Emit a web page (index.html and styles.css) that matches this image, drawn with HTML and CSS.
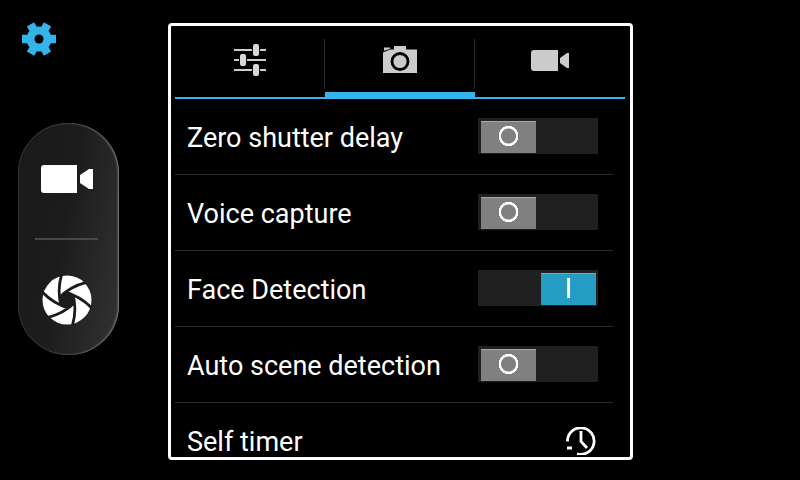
FILE: index.html
```html
<!DOCTYPE html>
<html lang="en">
<head>
<meta charset="utf-8">
<title>Camera settings</title>
<link rel="stylesheet" href="styles.css">
</head>
<body>
<aside class="side">
  <button class="gear" aria-label="Settings">
    <svg width="36" height="36" viewBox="-18 -18 36 36">
      <defs><path id="teeth" d="M-17-4.200h34v8.400h-34z"/></defs>
      <g fill="#35b4e9">
        <circle r="12.500"/>
        <use href="#teeth"/><use href="#teeth" transform="rotate(60)"/><use href="#teeth" transform="rotate(120)"/>
      </g>
      <circle r="4.500"/>
    </svg>
  </button>
  <div class="shutter-bar">
    <button class="capture" aria-label="Record video">
      <svg width="54" height="30" viewBox="0 0 54 30">
        <path fill="#fff" d="M4 1h33v28H4q-3 0-3-3V4q0-3 3-3zM53 5v20h-4l-9-6v-8l9-6z"/>
      </svg>
    </button>
    <hr class="split">
    <button class="capture" aria-label="Take photo">
      <svg width="50" height="50" viewBox="-25 -25 50 50">
        <defs><path id="blade" d="M-5.500-25Q-10-10-6 5"/></defs>
        <circle r="24.500" fill="#fff"/>
        <path fill="#1c1c1c" d="M-8.500 0l4.250-7.400h8.500L8.500 0 4.250 7.400h-8.500z"/>
        <g fill="none" stroke="#1c1c1c" stroke-width="2.800">
          <use href="#blade"/><use href="#blade" transform="rotate(60)"/><use href="#blade" transform="rotate(120)"/>
          <use href="#blade" transform="rotate(180)"/><use href="#blade" transform="rotate(240)"/><use href="#blade" transform="rotate(300)"/>
        </g>
      </svg>
    </button>
  </div>
</aside>
<main class="panel">
  <nav class="tabs">
    <button class="tab" aria-label="General">
      <svg width="34" height="34" viewBox="0 0 34 34">
        <path stroke="#ccc" stroke-width="2" d="M1 6h18M27 6h6M1 16h5M14 16h19M1 26h18M27 26h6"/>
        <g fill="#d8d8d8"><rect x="20" y="0" width="6" height="12" rx="2"/><rect x="7" y="10" width="6" height="12" rx="2"/><rect x="20" y="20" width="6" height="12" rx="2"/></g>
      </svg>
    </button>
    <button class="tab active" aria-label="Photo">
      <svg width="34" height="28" viewBox="0 0 34 28">
        <path fill="#ccc" d="M0 6.500l7-3h4V0h12v3.500h11V27H0zM1 1.500h6v1.200L1 4.800z"/>
        <circle cx="17" cy="15.500" r="8" fill="#ccc" stroke="#000" stroke-width="2.800"/>
      </svg>
    </button>
    <button class="tab" aria-label="Video">
      <svg width="38" height="22" viewBox="0 0 38 22">
        <path fill="#ccc" d="M3 0h24v21H3q-3 0-3-3V3q0-3 3-3zM38 3v15h-2l-7-5V8l7-5z"/>
      </svg>
    </button>
  </nav>
  <div class="list">
    <label class="row"><span>Zero shutter delay</span><input class="switch" type="checkbox"></label>
    <label class="row"><span>Voice capture</span><input class="switch" type="checkbox"></label>
    <label class="row"><span>Face Detection</span><input class="switch" type="checkbox" checked></label>
    <label class="row"><span>Auto scene detection</span><input class="switch" type="checkbox"></label>
    <button class="row"><span>Self timer</span>
      <svg width="32" height="28" viewBox="1 0 32 28">
        <path fill="none" stroke="#fff" stroke-width="2.800" d="M2.500 14.500A13.300 13.300 0 1 1 12 26.800M2 21h5M16 4V14.500l6 6.500"/>
      </svg>
    </button>
  </div>
</main>
</body>
</html>
```
FILE: styles.css
```css
* { box-sizing: border-box; }

body {
  margin: 0;
  height: 100vh;
  padding: 23px 0 20px;
  display: grid;
  grid-template-columns: 168px minmax(0, 1fr) 167px;
  grid-template-rows: minmax(0, 1fr);
  background: #000;
  color: #fff;
  font-family: Roboto, "Liberation Sans", sans-serif;
}

button {
  margin: 0;
  padding: 0;
  border: 0;
  background: none;
  color: inherit;
  font: inherit;
}

svg { display: block; }

.side {
  display: flex;
  flex-direction: column;
  align-items: flex-start;
  padding: 0 18px;
}

.gear {
  margin: -2px 0 0 3px;
}

.shutter-bar {
  display: flex;
  flex-direction: column;
  width: 101px;
  height: 232px;
  margin-top: 66px;
  padding-right: 4px;
  border-radius: 50px;
  background: linear-gradient(100deg, #1a1a1a 0%, #1c1c1c 45%, #333 100%);
  box-shadow: inset -1px 0 2px #888, inset 1px 0 1px #2c2c2c;
}

.capture {
  flex: 1;
  display: flex;
  align-items: center;
  justify-content: center;
}

.capture:first-child { padding-bottom: 4px; }

.capture:last-child { padding-top: 4px; }

.split {
  width: 63px;
  margin: 0 auto;
  border: 0;
  border-top: 2px solid #484848;
}

.panel {
  display: flex;
  flex-direction: column;
  border: 3px solid #fff;
  border-radius: 4px;
  padding: 0 5px 0 4px;
  overflow: hidden;
}

.tabs {
  flex: none;
  display: grid;
  grid-template-columns: repeat(3, 1fr);
  height: 73px;
}

.tab {
  display: flex;
  align-items: center;
  justify-content: center;
  padding-bottom: 2px;
  border-bottom: 2px solid #35b4ee;
  background: linear-gradient(#2c2c2c, #2c2c2c) no-repeat right 13px / 1px 50px;
}

.tab:last-child { background: none; }

.tab.active {
  padding-top: 2px;
  padding-bottom: 0;
  border-bottom-width: 7px;
}

.list { padding-right: 12px; }

.row {
  display: flex;
  align-items: center;
  justify-content: space-between;
  width: 100%;
  height: 76px;
  padding: 0 15px 0 12px;
  border-bottom: 1px solid #2a2a2a;
  font-size: 27px;
  line-height: 32px;
}

.row span { padding-top: 2px; }

.switch {
  appearance: none;
  display: flex;
  width: 120px;
  height: 36px;
  margin: 0 0 2px;
  padding: 3px 2px 3px 3px;
  background: #202020;
}

.switch::before {
  content: "";
  width: 55px;
  height: 31px;
  border-top: 1px solid #aaa;
  background: radial-gradient(circle at 50% 14px, transparent 7px, #fff 8px, #fff 9px, transparent 10px) #808080;
  background: radial-gradient(circle at 50% 14px, transparent 7px, #fff 8px, #fff 10px, transparent 10px) #808080;
}

.switch:checked { justify-content: flex-end; }

.switch:checked::before {
  border-top-color: #4fb9df;
  background: linear-gradient(#fff, #fff) no-repeat 50% 40% / 3px 20px #269dc5;
}
```
